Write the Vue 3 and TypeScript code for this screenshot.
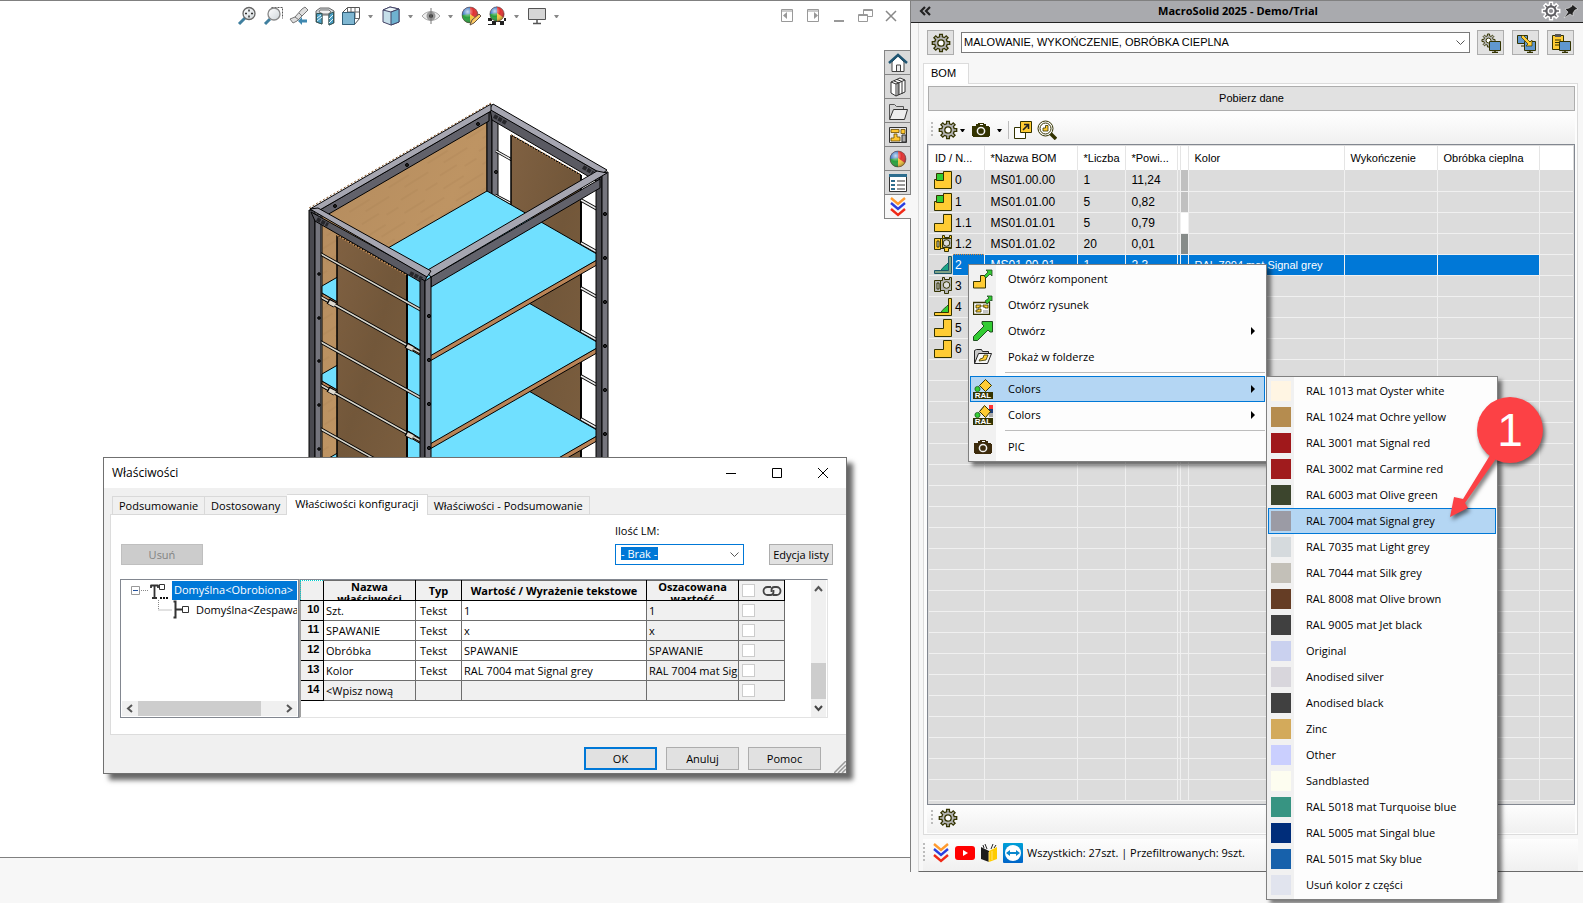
<script setup lang="ts">
import { ref } from 'vue'

interface BomRow {
  icon: string
  id: string
  name: string
  qty: string
  area: string
  swatch: string
  color: string
  selected?: boolean
}

interface MenuItem {
  icon: string
  label: string
  arrow?: boolean
  active?: boolean
  separator?: boolean
}

interface ColorItem {
  label: string
  color: string
  active?: boolean
}

interface PropertyRow {
  no: number
  name: string
  type: string
  value: string
  result: string
  checked: boolean
}

const bomRows: BomRow[] = [
  { icon: 'assembly', id: '0', name: 'MS01.00.00', qty: '1', area: '11,24', swatch: '#c0c0c0', color: '' },
  { icon: 'assembly', id: '1', name: 'MS01.01.00', qty: '5', area: '0,82', swatch: '#c0c0c0', color: '' },
  { icon: 'part', id: '1.1', name: 'MS01.01.01', qty: '5', area: '0,79', swatch: '#ffffff', color: '' },
  { icon: 'bolt', id: '1.2', name: 'MS01.01.02', qty: '20', area: '0,01', swatch: '#878c8a', color: '' },
  { icon: 'weld-selected', id: '2', name: 'MS01.00.01', qty: '1', area: '2,3', swatch: '#0078d7', color: 'RAL 7004 mat Signal grey', selected: true },
  { icon: 'bolt-grey', id: '3', name: '', qty: '', area: '', swatch: '', color: '' },
  { icon: 'weld', id: '4', name: '', qty: '', area: '', swatch: '', color: '' },
  { icon: 'part', id: '5', name: '', qty: '', area: '', swatch: '', color: '' },
  { icon: 'part', id: '6', name: '', qty: '', area: '', swatch: '', color: '' },
]
const emptyRows = 21

const menuItems: MenuItem[] = [
  { icon: 'open-part', label: 'Otwórz komponent' },
  { icon: 'open-drawing', label: 'Otwórz rysunek' },
  { icon: 'open', label: 'Otwórz', arrow: true },
  { icon: 'folder-part', label: 'Pokaż w folderze' },
  { icon: 'ral', label: 'Colors', arrow: true, active: true, separator: true },
  { icon: 'ral-multi', label: 'Colors', arrow: true },
  { icon: 'camera-brown', label: 'PIC', separator: true },
]

const colorItems: ColorItem[] = [
  { label: 'RAL 1013 mat Oyster white', color: '#fff5e3' },
  { label: 'RAL 1024 mat Ochre yellow', color: '#b58c4f' },
  { label: 'RAL 3001 mat Signal red', color: '#a0181b' },
  { label: 'RAL 3002 mat Carmine red', color: '#a01b1d' },
  { label: 'RAL 6003 mat Olive green', color: '#3c452d' },
  { label: 'RAL 7004 mat Signal grey', color: '#9b9ba5', active: true },
  { label: 'RAL 7035 mat Light grey', color: '#d5dadd' },
  { label: 'RAL 7044 mat Silk grey', color: '#c3c0b8' },
  { label: 'RAL 8008 mat Olive brown', color: '#653d25' },
  { label: 'RAL 9005 mat Jet black', color: '#404040' },
  { label: 'Original', color: '#cad1ef' },
  { label: 'Anodised silver', color: '#d8d6dc' },
  { label: 'Anodised black', color: '#404040' },
  { label: 'Zinc', color: '#d3aa5b' },
  { label: 'Other', color: '#cacffe' },
  { label: 'Sandblasted', color: '#fdfdf0' },
  { label: 'RAL 5018 mat Turquoise blue', color: '#379482' },
  { label: 'RAL 5005 mat Singal blue', color: '#002d7a' },
  { label: 'RAL 5015 mat Sky blue', color: '#1761ab' },
  { label: 'Usuń kolor z części', color: '#e1e4ee' },
]

const propertyRows = ref<PropertyRow[]>([
  { no: 10, name: 'Szt.', type: 'Tekst', value: '1', result: '1', checked: false },
  { no: 11, name: 'SPAWANIE', type: 'Tekst', value: 'x', result: 'x', checked: false },
  { no: 12, name: 'Obróbka', type: 'Tekst', value: 'SPAWANIE', result: 'SPAWANIE', checked: false },
  { no: 13, name: 'Kolor', type: 'Tekst', value: 'RAL 7004 mat Signal grey', result: 'RAL 7004 mat Sig', checked: false },
  { no: 14, name: '<Wpisz nową', type: '', value: '', result: '', checked: false },
])
const allChecked = ref(false)

const dialogTabs = ['Podsumowanie', 'Dostosowany', 'Właściwości konfiguracji', 'Właściwości - Podsumowanie']

const viewTools = [
  { id: 'v-fit', label: 'Dopasuj do okna', drop: false },
  { id: 'v-area', label: 'Powiększ obszar', drop: false },
  { id: 'v-prev', label: 'Poprzedni widok', drop: false },
  { id: 'v-section', label: 'Widok przekroju', drop: false },
  { id: 'v-orient', label: 'Orientacja widoku', drop: true },
  { id: 'v-style', label: 'Styl wyświetlania', drop: true },
  { id: 'v-eye', label: 'Ukryj lub pokaż', drop: true },
  { id: 'v-edit', label: 'Edytuj wygląd', drop: false },
  { id: 'v-scene', label: 'Zastosuj scenę', drop: true },
  { id: 'v-monitor', label: 'Ustawienia widoku', drop: true },
]
const windowTools = [
  { id: 'w-left', label: 'Dokuj w lewo' },
  { id: 'w-right', label: 'Dokuj w prawo' },
  { id: 'w-min', label: 'Minimalizuj' },
  { id: 'w-restore', label: 'Przywróć' },
  { id: 'w-close', label: 'Zamknij' },
]
const paneTabs = [
  { id: 't-home', label: 'Zasoby' },
  { id: 't-books', label: 'Biblioteka projektu' },
  { id: 't-folder', label: 'Eksplorator plików' },
  { id: 't-views', label: 'Paleta widoków' },
  { id: 'ball', label: 'Wyglądy' },
  { id: 't-list', label: 'Właściwości' },
  { id: 'chevrons', label: 'MacroSolid' },
]

/* Closed outline of a cog centred in a 20 x 20 box. */
function gearOutline(outer: number, inner: number, teeth: number): string {
  const points: string[] = []
  const step = (Math.PI * 2) / teeth
  for (let i = 0; i < teeth; i++) {
    const a = i * step
    const corners: [number, number][] = [
      [inner, a - step * 0.28],
      [outer, a - step * 0.2],
      [outer, a + step * 0.2],
      [inner, a + step * 0.28],
    ]
    for (const [r, t] of corners) {
      points.push(`${(10 + r * Math.sin(t)).toFixed(1)} ${(10 - r * Math.cos(t)).toFixed(1)}`)
    }
  }
  return `M${points.join('L')}Z`
}
const gear = gearOutline(8.8, 6.4, 8)

const shelfOffsets = [176, 88, 0]
const leftRods = [253, 296, 341, 384, 428]
const rightRods = [200, 243, 288, 331, 376, 419]
</script>

<template>
  <svg class="defs" aria-hidden="true">
    <defs>
      <linearGradient id="lens" x1="0" y1="0" x2="1" y2="1"><stop offset="0" stop-color="#fff" /><stop offset="1" stop-color="#cfd6da" /></linearGradient>
      <linearGradient id="tv" x1="0" y1="0" x2="0" y2="1"><stop offset="0" stop-color="#00a0d8" /><stop offset="1" stop-color="#0064c8" /></linearGradient>
      <radialGradient id="shine" cx=".35" cy=".3" r=".75"><stop offset="0" stop-color="#fff" stop-opacity=".75" /><stop offset=".5" stop-color="#fff" stop-opacity="0" /><stop offset="1" stop-color="#000" stop-opacity=".35" /></radialGradient>

      <symbol id="gear" viewBox="0 0 20 20"><path :d="gear" fill="#b5b5b5" stroke="#333300" stroke-width="1.300" /><circle cx="10" cy="10" r="3.2" fill="#fff" stroke="#333300" stroke-width="1.300" /></symbol>
      <symbol id="gear-light" viewBox="0 0 20 20"><path :d="gear" fill="#5e5e62" stroke="#fff" stroke-width="1.5" /><circle cx="10" cy="10" r="2.8" fill="#8d8d92" stroke="#fff" stroke-width="1.4" /></symbol>
      <symbol id="camera" viewBox="0 0 20 20"><path d="M1 6h4V4h2V3h6v1h2v2h3v1h1v9h-1v1H2v-1H1z" fill="#333300" /><circle cx="10" cy="11" r="3.6" fill="#333300" stroke="#f4f4f4" stroke-width="1.5" /><path d="M9 4h3v1H9z" fill="#fff" /></symbol>
      <symbol id="camera-brown" viewBox="0 0 20 20"><path d="M1 6h4V4h2V3h6v1h2v2h3v1h1v9h-1v1H2v-1H1z" fill="#3d2b0c" /><circle cx="10" cy="11" r="3.6" fill="#3d2b0c" stroke="#f4f4f4" stroke-width="1.5" /><path d="M9 4h3v1H9z" fill="#fff" /></symbol>
      <symbol id="export" viewBox="0 0 20 20"><path d="M1.500 7.500h11v11h-11z" fill="#fff" stroke="#333300" /><path d="M7.500 1.500h11v11h-11z" fill="#ffcc33" stroke="#333300" /><path d="M10 10l5-5M11 4.500h4.500V9" fill="none" stroke="#222" stroke-width="1.600" /></symbol>
      <symbol id="find-part" viewBox="0 0 20 20"><path d="M13 13l6 6" stroke="#333300" stroke-width="3.500" /><circle cx="8.500" cy="8.500" r="7.500" fill="#fff" stroke="#333300" /><circle cx="8.500" cy="8.500" r="5.500" fill="#fff" stroke="#333300" /><path d="M6 11V8h2.500V5.500H11V11z" fill="#ffcc33" stroke="#333300" stroke-width=".8" /></symbol>
      <symbol id="assembly" viewBox="0 0 20 20"><path d="M1.500 9.500h9v-8h8v17h-17z" fill="#ffcc33" stroke="#333300" /><path d="M3.500 3.500h7v7h-7z" fill="#33cc33" stroke="#333300" /></symbol>
      <symbol id="part" viewBox="0 0 20 20"><path d="M1.500 10.500h9v-9h8v17h-17z" fill="#ffcc33" stroke="#333300" /></symbol>
      <symbol id="bolt" viewBox="0 0 20 20"><path d="M1.500 4.500h6v11h-6zM7.500 4.500h2v-3h2v2h5v-2h2v13h-3v3h-4v-3h-4z" fill="#ffcc33" stroke="#333300" /><path d="M9.500 4.500h9v9h-9z" fill="#b5b5b5" stroke="#333300" /><circle cx="13.500" cy="9" r="3.300" fill="#ddd" stroke="#333300" /><path d="M4 7h2v6H4z" fill="#ddd" stroke="#333300" /></symbol>
      <symbol id="bolt-grey" viewBox="0 0 20 20"><path d="M1.500 4.500h6v11h-6zM7.500 4.500h2v-3h2v2h5v-2h2v13h-3v3h-4v-3h-4z" fill="#b5b5b5" stroke="#333300" /><circle cx="13.500" cy="9" r="3.300" fill="#ddd" stroke="#333300" /><path d="M4 7h2v6H4z" fill="#ddd" stroke="#333300" /></symbol>
      <symbol id="weld" viewBox="0 0 20 20"><path d="M8 15.500c1-3 5-5 7.500-8v8z" fill="#33cc33" stroke="#1f5a1f" /><path d="M1.500 15.500h14v-14h3v17h-17z" fill="#ffcc33" stroke="#333300" /></symbol>
      <symbol id="weld-selected" viewBox="0 0 20 20"><path d="M8 15.500c1-3 5-5 7.500-8v8z" fill="#1aa385" stroke="#10605c" /><path d="M1.500 15.500h14v-14h3v17h-17z" fill="#80a285" stroke="#1a5668" /></symbol>
      <symbol id="open-part" viewBox="0 0 20 20"><path d="M.5 12.500h7v-6h5v12.500h-12z" fill="#ffcc33" stroke="#333300" /><path d="M11 7l4-4-2-2h6v6l-2-2-4 4z" fill="#33cc33" stroke="#1f4d1f" stroke-width=".8" /></symbol>
      <symbol id="open-drawing" viewBox="0 0 20 20"><path d="M.5 7.500h16v12H.5z" fill="#fff" stroke="#333300" stroke-width="1.300" /><path d="M3 10h5v2H6v1H3zM10 10h5v3h-3v-1h-2zM3 17v-2h2v-1h3v3z" fill="#ffcc33" stroke="#333300" stroke-width=".8" /><path d="M10 15h5v3h-5z" fill="#c4c4c4" /><path d="M12 6l4-3-2-2h5v5l-1-1-4 4z" fill="#33cc33" stroke="#1f4d1f" stroke-width=".8" /></symbol>
      <symbol id="open" viewBox="0 0 20 20"><path d="M.5 19.500v-4L11 5 9 3V.5h10.500V11H17l-2-2L4.500 19.500z" fill="#33cc33" stroke="#1f4d1f" /></symbol>
      <symbol id="folder-part" viewBox="0 0 20 20"><path d="M1.500 16.500v-13l2-1h5l1 2h6v3" fill="#c8c8c8" stroke="#222" /><path d="M1.500 16.500l4-10h13l-4 10z" fill="#f5f5f5" stroke="#222" /><path d="M6 14l1-2 3-1 1-3h4l-2 5z" fill="#ffcc33" stroke="#333300" stroke-width=".8" /></symbol>
      <symbol id="ral" viewBox="0 0 20 20"><path d="M12.500.5l6 6-6 6-6-6z" fill="#ffcc33" stroke="#333300" /><path d="M4 9l7-7" stroke="#333300" stroke-dasharray="1 1" /><circle cx="4.500" cy="10" r="2.600" fill="#33cc33" stroke="#1f5a1f" stroke-width=".8" /><path d="M0 13h20v7H0z" fill="#333300" /><text x="10" y="19" font-size="8" font-weight="700" fill="#fff" text-anchor="middle" font-family="Liberation Sans, sans-serif">RAL</text></symbol>
      <symbol id="ral-multi" viewBox="0 0 20 20"><path d="M16 0h4v4h-4z" fill="#ff3232" /><path d="M16 4h4v4h-4z" fill="#1b3e78" /><path d="M16 8h4v4h-4z" fill="#a8a8a8" /><path d="M11.500.5l6 6-5 6-6-6z" fill="#ffcc33" stroke="#333300" /><path d="M4 9l7-7" stroke="#333300" stroke-dasharray="1 1" /><circle cx="4.500" cy="10" r="2.600" fill="#33cc33" stroke="#1f5a1f" stroke-width=".8" /><path d="M0 13h20v7H0z" fill="#333300" /><text x="10" y="19" font-size="8" font-weight="700" fill="#fff" text-anchor="middle" font-family="Liberation Sans, sans-serif">RAL</text></symbol>
      <symbol id="screen" viewBox="0 0 20 20"><path d="M8.500 8.500h11v9h-11z" fill="#6097cf" stroke="#333300" /><path d="M14 18v1.500M11 19.500h6" stroke="#333300" stroke-width="1.500" /></symbol>
      <symbol id="cfg-gear" viewBox="0 0 20 20"><svg x="0" y="0" width="15" height="15"><use href="#gear" /></svg><use href="#screen" /></symbol>
      <symbol id="cfg-copy" viewBox="0 0 20 20"><path d="M1.500 2.500h10v8h-10z" fill="#6097cf" stroke="#333300" /><path d="M5 13h4" stroke="#333300" /><use href="#screen" /><path d="M7 2l7 7 2-2v6h-6l2-2-7-7z" fill="#ffcc33" stroke="#333300" stroke-width=".7" /></symbol>
      <symbol id="cfg-paste" viewBox="0 0 20 20"><path d="M1.500 2.500h11v14h-11z" fill="#ffcc33" stroke="#333300" /><path d="M4 1h6v3H4z" fill="#555" /><path d="M4 7h6M4 9.500h4M4 12h4" stroke="#333300" /><use href="#screen" /></symbol>
      <symbol id="chevrons" viewBox="0 0 20 20"><path d="M3 1l7 6 7-6" fill="none" stroke="#ff9a2e" stroke-width="2.400" /><path d="M3 6l7 6 7-6" fill="none" stroke="#2a3fe0" stroke-width="2.400" /><path d="M3 12l7 6 7-6" fill="none" stroke="#f02a18" stroke-width="2.400" /></symbol>
      <symbol id="youtube" viewBox="0 0 20 20"><rect x="0" y="3" width="20" height="14" rx="3" fill="#f00" /><path d="M8 7l5 3-5 3z" fill="#fff" /></symbol>
      <symbol id="book" viewBox="0 0 20 20"><path d="M2 4l8 4v11l-8-3z" fill="#1c1c1c" /><path d="M10 8l8-4v12l-8 3z" fill="#fc0" /><path d="M5 5L4 2M8 6L6 1M12 6l2-5M15 5l2-3" stroke="#222" /><path d="M10 9v10M13 8v9" stroke="#ffe27a" /></symbol>
      <symbol id="teamviewer" viewBox="0 0 20 20"><rect width="20" height="20" rx="1" fill="url(#tv)" /><circle cx="10" cy="10" r="8" fill="#fff" /><path d="M3 10l4-3v2h6V7l4 3-4 3v-2H7v2z" fill="#0a86cc" /></symbol>
      <symbol id="ball" viewBox="0 0 20 20"><circle cx="10" cy="10" r="8" fill="#e03030" /><path d="M10 2a8 8 0 0 0-8 8h8z" fill="#2c6fc0" /><path d="M2 10a8 8 0 0 0 8 8V9z" fill="#28a03c" /><path d="M10 18a8 8 0 0 0 7-4l-7-5z" fill="#f5c63c" /><circle cx="10" cy="10" r="8" fill="url(#shine)" stroke="#444" stroke-width=".5" /></symbol>

      <symbol id="v-fit" viewBox="0 0 20 20"><path d="M2 18l6-6" stroke="#3f7f9f" stroke-width="3" /><circle cx="12" cy="7.500" r="6" fill="url(#lens)" stroke="#666" stroke-width="1.300" /><path d="M12 3.500v2M12 9.500v2M8 7.500h2M14 7.500h2" stroke="#333" stroke-width="1.500" /></symbol>
      <symbol id="v-area" viewBox="0 0 20 20"><path d="M8.500 1.500h11v11" fill="none" stroke="#555" stroke-dasharray="2 1" /><path d="M2 18l5-5" stroke="#3f7f9f" stroke-width="3" /><circle cx="11" cy="8" r="6" fill="url(#lens)" stroke="#888" stroke-width="1.300" /></symbol>
      <symbol id="v-prev" viewBox="0 0 20 20"><path d="M1 13l5-2 7-8 3-2 3 3-3 3-8 8-4 2z" fill="#dedede" stroke="#777" /><path d="M6 11l4 3M10 7l3 3" stroke="#777" /><path d="M9 15l4-4v2.500h5v3h-5V19z" fill="#3f88b0" /></symbol>
      <symbol id="v-section" viewBox="0 0 20 20"><path d="M1 5l4-3h9l5 3v12l-5 2V9H7v9l-6-2z" fill="#cfd3d6" stroke="#666" /><path d="M5 4h9l2 2-3 2H8L4 6z" fill="#f1f1f1" stroke="#777" /><path d="M1.500 7.500H7V18l-5.500-2zM14 8l4.500-2v11L14 19z" fill="#4a9ec4" stroke="#355" /><path d="M2 12l4-3M2 15l5-4M14 13l4-4M14 17l4-4" stroke="#e4f5fb" /></symbol>
      <symbol id="v-orient" viewBox="0 0 20 20"><path d="M1.500 6.500l5-5h12v11l-5 6h-12z" fill="#fff" stroke="#555" /><path d="M6.500 1.500v11h12M10 2v10M14 2v10M7 6h11" fill="none" stroke="#666" /><path d="M1.500 6.500h12v12h-12z" fill="#7fb7d2" stroke="#32607a" /></symbol>
      <symbol id="v-style" viewBox="0 0 20 20"><path d="M2 4l7-3 9 2v13l-8 3-8-3z" fill="#c6dfea" stroke="#446" /><path d="M2 4l8 2 8-3-9-2z" fill="#eef7fa" stroke="#446" /><path d="M10 6v13l8-3V3z" fill="#6fb2d0" stroke="#446" /></symbol>
      <symbol id="v-eye" viewBox="0 0 20 20"><path d="M1 10c5-6 13-6 18 0-5 6-13 6-18 0z" fill="#efefef" stroke="#aaa" /><circle cx="10" cy="10" r="4.500" fill="#999" /><circle cx="10" cy="10" r="2" fill="#333" /><path d="M10 2v16" stroke="#777" /></symbol>
      <symbol id="v-edit" viewBox="0 0 20 20"><svg x="-1" y="-1" width="20" height="20"><use href="#ball" /></svg><path d="M9 19l2-5 7-6 2 2-7 7z" fill="#fc6" stroke="#654" /></symbol>
      <symbol id="v-scene" viewBox="0 0 20 20"><path d="M1 12h18v7H1z" fill="#fff" /><path d="M1 12h4v3H1zM9 13h4v3H9zM5 15h4v4H5zM13 15h4v4h-4zM17 12h2v3h-2zM1 18h4v1H1z" fill="#222" /><svg x="1" y="-1" width="18" height="18"><use href="#ball" /></svg></symbol>
      <symbol id="v-monitor" viewBox="0 0 20 20"><path d="M1.500 2.500h17v11h-17z" fill="#d6d6d6" stroke="#555" /><path d="M10 14v3M6 17.500h8" stroke="#555" stroke-width="1.500" /></symbol>

      <symbol id="w-left" viewBox="0 0 20 20"><path d="M4.500 3.500h11v12h-11zM4 5h12" fill="none" stroke="#999" /><path d="M10 6v7L6 9.500z" fill="#999" /></symbol>
      <symbol id="w-right" viewBox="0 0 20 20"><path d="M4.500 3.500h11v12h-11zM4 5h12" fill="none" stroke="#999" /><path d="M11 6v7l4-3.500z" fill="#999" /></symbol>
      <symbol id="w-min" viewBox="0 0 20 20"><path d="M5 15h10" stroke="#999" stroke-width="2" /></symbol>
      <symbol id="w-restore" viewBox="0 0 20 20"><path d="M8.500 9V3.500h9v7H13M8 4.500h10" fill="none" stroke="#999" /><path d="M3.500 8.500h9v7h-9zM3 9.500h10" fill="none" stroke="#999" /></symbol>
      <symbol id="w-close" viewBox="0 0 20 20"><path d="M5 5l10 10M15 5L5 15" stroke="#888" stroke-width="1.500" /></symbol>

      <symbol id="t-home" viewBox="0 0 20 20"><path d="M4 9v9.500h12V9l-6-6z" fill="#fff" stroke="#444" /><path d="M8.500 18v-6h4v6" fill="#eee" stroke="#444" /><path d="M1 10l9-8 9 8" fill="none" stroke="#1f5572" stroke-width="2.500" /></symbol>
      <symbol id="t-books" viewBox="0 0 20 20"><path d="M3 5l9-4 5 2v12l-9 4-5-3z" fill="#fff" stroke="#333" /><path d="M3 5l5 2v12M8 7l9-4M6 4l5 2v12M9 2.500l5 2V17M10 6v12" fill="none" stroke="#333" /></symbol>
      <symbol id="t-folder" viewBox="0 0 20 20"><path d="M1.500 18V3.500h5l2 2h7V9" fill="#d5d5d5" stroke="#555" /><path d="M1.500 18.500l4-10h14l-3 10z" fill="#eee" stroke="#333" /></symbol>
      <symbol id="t-views" viewBox="0 0 20 20"><path d="M1.500 2.500h17v15h-17z" fill="#e8e8e8" stroke="#333" /><path d="M3 4.500h8v3H3zM13 4.500h4v4h-4zM6 9h3v3h3v4H3v-3h3z" fill="#ffc832" stroke="#6a4c00" stroke-width=".8" /><path d="M14 10h4v7h-4z" fill="#aaa" stroke="#333" /></symbol>
      <symbol id="t-list" viewBox="0 0 20 20"><path d="M1.500 1.500h17v17h-17z" fill="#fff" stroke="#333" /><path d="M1 1h18v3H1z" fill="#2d6d8e" /><path d="M3 7h4v2H3zM3 11h4v2H3zM3 15h4v2H3z" fill="#2d6d8e" /><path d="M9 8h8M9 12h8M9 16h8" stroke="#333" /></symbol>
    </defs>
  </svg>

  <div class="app">
    <section class="workspace">
      <header class="view-bar">
        <div class="view-tools">
          <template v-for="tool in viewTools" :key="tool.id">
            <button type="button" class="bare" :aria-label="tool.label"><svg class="ico"><use :href="'#' + tool.id" /></svg></button>
            <button v-if="tool.drop" type="button" class="bare drop" :aria-label="tool.label + ' – więcej'"></button>
          </template>
        </div>
        <div class="view-tools">
          <button v-for="tool in windowTools" :key="tool.id" type="button" class="bare" :aria-label="tool.label"><svg class="ico"><use :href="'#' + tool.id" /></svg></button>
        </div>
      </header>

      <div class="stage">
        <svg class="model" viewBox="308 100 302 680" width="302" height="680" role="img" aria-label="Model regału">
          <defs>
            <clipPath id="cut"><path d="M308 100h302v360H308z" /></clipPath>
            <linearGradient id="wood" x1="0" y1="0" x2="1" y2="1"><stop offset="0" stop-color="#b38b5e" /><stop offset=".5" stop-color="#be9463" /><stop offset="1" stop-color="#b0895c" /></linearGradient>
            <linearGradient id="wood-dark" x1="0" y1="0" x2="1" y2="1"><stop offset="0" stop-color="#806142" /><stop offset=".5" stop-color="#72573a" /><stop offset="1" stop-color="#7b5e3f" /></linearGradient>
            <pattern id="grain" width="46" height="30" patternUnits="userSpaceOnUse" patternTransform="rotate(-32)"><path d="M0 5h24M14 13h28M4 22h20M30 27h14" stroke="#7a5730" stroke-opacity=".08" stroke-width="2" /></pattern>
          </defs>
          <g clip-path="url(#cut)" stroke="#000" stroke-linejoin="round">
            <path d="M322 215L487 120V470H322z" fill="url(#wood)" />
            <path d="M322 215L487 120V470H322z" fill="url(#grain)" stroke="none" />
            <path d="M487 112h5v90h-5z" fill="#4d4d54" />
            <path d="M492 112h6v90h-6z" fill="#77777f" />
            <circle cx="496" cy="172" r="1.500" fill="#333" />
            <path d="M496 151l16 9M495 195l17 9" stroke-width="3" /><path d="M496 151l16 9M495 195l17 9" stroke="#eee" stroke-width="1.400" />
            <path d="M511 135l70 40V470h-70z" fill="url(#wood-dark)" />
            <path d="M511 135l70 40V470h-70z" fill="url(#grain)" />
            <path d="M511 135l70 40" stroke="#b08050" stroke-dasharray="1 2" stroke-width="2" />
            <path d="M581 175v290" stroke-width="1.800" />
            <g v-for="y in rightRods" :key="y">
              <path :d="`M581 ${y}l16 9`" stroke-width="3.400" /><path :d="`M581 ${y}l16 9`" stroke="#eee" stroke-width="1.600" />
            </g>
            <g v-for="dy in shelfOffsets" :key="dy" :transform="`translate(0 ${dy})`">
              <path d="M602 257v5L430 361 322 299v-6l106 61z" fill="#b98356" />
              <path d="M487 191l115 66-172 99-108-63v-7z" fill="#70e0ff" />
            </g>
            <path d="M337 235l70 40V470h-70z" fill="url(#wood-dark)" />
            <path d="M337 235l70 40V470h-70z" fill="url(#grain)" />
            <path d="M337 235l70 40" stroke="#c08b55" stroke-dasharray="2 1" stroke-width="2" />
            <path d="M407 275v190" stroke-width="1.800" />
            <g v-for="(y, i) in leftRods" :key="y">
              <path :d="`M319 ${y}l102 57`" stroke-width="3.200" /><path :d="`M319 ${y}l102 57`" stroke="#d8d6cc" stroke-width="1.500" />
              <path v-if="i % 2" :d="`M328 ${y + 5}l7 4M406 ${y + 49}l7 4`" stroke-width="6" />
              <path v-if="i % 2" :d="`M329 ${y + 6}l6 3M407 ${y + 50}l6 3`" stroke="#dedad0" stroke-width="4" />
            </g>
            <path d="M309 210h6v255h-6z" fill="#4a4a50" /><path d="M315 214h6v250h-6z" fill="#75757d" />
            <path d="M596 176h6v290h-6z" fill="#4a4a50" /><path d="M602 172h6v290h-6z" fill="#75757d" />
            <path d="M490 109L602 174L598 182L492 120z" fill="#5a5a62" />
            <path d="M493 104L607 170L602 174L489 109z" fill="#a6a6b1" />
            <path d="M318 211L489 112V121L327 215z" fill="#62626b" />
            <path d="M491 104V111L318 211L310 209z" fill="#a6a6b1" />
            <path d="M491 103L309 208" stroke="#8b5a2e" stroke-dasharray="2 2" />
            <path d="M431 277L600 179V188L431 287z" fill="#62626b" />
            <path d="M426 271L597 171L607 173L431 277z" fill="#a6a6b1" />
            <path d="M311 212L427 276L424 284L315 221z" fill="#5a5a62" />
            <path d="M310 209L318 208L431 271L427 277z" fill="#a6a6b1" />
            <path d="M420 278l5 3v185h-5z" fill="#4a4a50" /><path d="M425 281l6-4v190h-6z" fill="#75757d" />
            <path d="M317 219l11 6M410 273l12 6M494 116l12 7M583 167l10 6" stroke="#26262a" stroke-width="4" stroke-dasharray="4 1" />
            <g fill="#222">
              <circle cx="335" cy="206" r="1.500" /><circle cx="407" cy="165" r="1.500" /><circle cx="478" cy="124" r="1.500" />
              <circle v-for="y in [274, 318, 361, 405, 449]" :key="'l' + y" cx="319" :cy="y" r="1.300" />
              <circle v-for="y in [316, 360, 404, 448]" :key="'f' + y" cx="429" :cy="y" r="1.600" />
              <circle v-for="y in [214, 258, 302, 346, 390, 434]" :key="'r' + y" cx="605" :cy="y" r="1.600" />
            </g>
          </g>
          <path d="M426 773.500h6M470 773.500h20M563 773.500h20" stroke="#222" />
        </svg>
        <nav class="pane-tabs" aria-label="Okienko zadań">
          <button v-for="tab in paneTabs" :key="tab.id" type="button" :class="{ on: tab.id === 'chevrons' }" :aria-label="tab.label">
            <svg class="ico"><use :href="'#' + tab.id" /></svg>
          </button>
        </nav>
      </div>
    </section>

    <aside class="panel">
      <header class="panel-title">
        <button type="button" class="bare" aria-label="Zwiń"><svg class="ico" viewBox="0 0 20 20"><path d="M10 6l-4 4 4 4M15 6l-4 4 4 4" fill="none" stroke="#222" stroke-width="2.200" /></svg></button>
        <h1>MacroSolid 2025 - Demo/Trial</h1>
        <button type="button" class="bare" aria-label="Ustawienia"><svg class="ico"><use href="#gear-light" /></svg></button>
        <button type="button" class="bare" aria-label="Przypnij"><svg class="ico" viewBox="0 0 20 20"><path d="M11 3l6 5-3 1-2 3 0 3-3-2-6 4 4-6-3-3 4-1 3-2z" fill="#222" stroke="#e8e8e8" stroke-width=".6" /></svg></button>
      </header>

      <div class="panel-body">
        <div class="config-row">
          <button type="button" class="tool" aria-label="Konfiguracja"><svg class="ico"><use href="#gear" /></svg></button>
          <select class="config" aria-label="Konfiguracja kolumn"><option>MALOWANIE, WYKOŃCZENIE, OBRÓBKA CIEPLNA</option></select>
          <div class="tools">
            <button type="button" class="tool" aria-label="Ustawienia ekranu"><svg class="ico"><use href="#cfg-gear" /></svg></button>
            <button type="button" class="tool" aria-label="Kopiuj"><svg class="ico"><use href="#cfg-copy" /></svg></button>
            <button type="button" class="tool" aria-label="Wklej"><svg class="ico"><use href="#cfg-paste" /></svg></button>
          </div>
        </div>

        <button type="button" class="bom-tab">BOM</button>
        <div class="bom-page">
          <button type="button" class="fetch">Pobierz dane</button>
          <div class="strip">
            <span class="grip"></span>
            <button type="button" class="bare" aria-label="Opcje"><svg class="ico"><use href="#gear" /></svg></button>
            <button type="button" class="bare caret" aria-label="Opcje – więcej"></button>
            <button type="button" class="bare" aria-label="Zdjęcie"><svg class="ico"><use href="#camera" /></svg></button>
            <button type="button" class="bare caret wide" aria-label="Zdjęcie – więcej"></button>
            <span class="bar"></span>
            <button type="button" class="bare" aria-label="Eksport"><svg class="ico"><use href="#export" /></svg></button>
            <button type="button" class="bare" aria-label="Szukaj"><svg class="ico"><use href="#find-part" /></svg></button>
          </div>

          <div class="bom-frame">
            <table class="bom">
              <colgroup><col class="c-id" /><col class="c-name" /><col class="c-qty" /><col class="c-area" /><col class="c-gap" /><col class="c-swatch" /><col class="c-color" /><col class="c-finish" /><col class="c-heat" /><col /></colgroup>
              <thead>
                <tr><th>ID / N...</th><th>*Nazwa BOM</th><th>*Liczba</th><th>*Powi...</th><th></th><th></th><th>Kolor</th><th>Wykończenie</th><th>Obróbka cieplna</th><th></th></tr>
              </thead>
              <tbody>
                <tr v-for="row in bomRows" :key="row.id" :class="{ selected: row.selected }">
                  <td class="id"><div><svg class="ico"><use :href="'#' + row.icon" /></svg><span>{{ row.id }}</span></div></td>
                  <td>{{ row.name }}</td><td>{{ row.qty }}</td><td>{{ row.area }}</td><td></td>
                  <td :style="{ backgroundColor: row.swatch }"></td>
                  <td class="words">{{ row.color }}</td><td></td><td></td><td></td>
                </tr>
                <tr v-for="n in emptyRows" :key="'empty' + n"><td v-for="c in 10" :key="c"></td></tr>
              </tbody>
            </table>
          </div>

          <div class="strip low">
            <span class="grip"></span>
            <button type="button" class="bare" aria-label="Ustawienia tabeli"><svg class="ico"><use href="#gear" /></svg></button>
          </div>
        </div>

        <footer class="status">
          <span class="grip"></span>
          <button type="button" class="bare" aria-label="MacroSolid"><svg class="ico"><use href="#chevrons" /></svg></button>
          <button type="button" class="bare" aria-label="YouTube"><svg class="ico"><use href="#youtube" /></svg></button>
          <button type="button" class="bare" aria-label="Podręcznik"><svg class="ico"><use href="#book" /></svg></button>
          <button type="button" class="bare" aria-label="TeamViewer"><svg class="ico"><use href="#teamviewer" /></svg></button>
          <p>Wszystkich: 27szt. | Przefiltrowanych: 9szt.</p>
        </footer>
      </div>

      <div class="menu context">
        <template v-for="(item, i) in menuItems" :key="i">
          <hr v-if="item.separator" />
          <button type="button" :class="{ active: item.active }">
            <svg class="ico"><use :href="'#' + item.icon" /></svg><span>{{ item.label }}</span><i v-if="item.arrow"></i>
          </button>
        </template>
      </div>

      <div class="menu colors">
        <button v-for="item in colorItems" :key="item.label" type="button" :class="{ active: item.active }">
          <b :style="{ backgroundColor: item.color }"></b><span>{{ item.label }}</span>
        </button>
      </div>

      <svg class="callout" viewBox="0 0 110 140" width="110" height="140" aria-label="Krok 1">
        <g class="callout-shape" fill="#fc4145">
          <path d="M56 72L27 119l-9-2-4 20 18-9-3-5L62 76z" />
          <circle cx="74" cy="50" r="33" />
        </g>
        <text x="74" y="66" text-anchor="middle">1</text>
      </svg>
    </aside>

    <section class="dialog" role="dialog" aria-labelledby="dialog-title">
      <header class="dialog-title">
        <h2 id="dialog-title">Właściwości</h2>
        <button type="button" class="bare" aria-label="Minimalizuj"><svg viewBox="0 0 12 12"><path d="M1 6.500h10" stroke="#000" /></svg></button>
        <button type="button" class="bare" aria-label="Maksymalizuj"><svg viewBox="0 0 12 12"><path d="M1.500 1.500h9v9h-9z" fill="none" stroke="#000" /></svg></button>
        <button type="button" class="bare" aria-label="Zamknij"><svg viewBox="0 0 12 12"><path d="M1 1l10 10M11 1L1 11" stroke="#000" /></svg></button>
      </header>

      <div class="dialog-tabs">
        <button v-for="tab in dialogTabs" :key="tab" type="button" :class="{ on: tab === 'Właściwości konfiguracji' }">{{ tab }}</button>
      </div>

      <div class="dialog-page">
        <div class="dialog-row">
          <button type="button" class="push usun" disabled>Usuń</button>
          <div class="field">
            <label for="lm">Ilość LM:</label>
            <select id="lm"><option>- Brak -</option></select>
          </div>
          <button type="button" class="push edit">Edycja listy</button>
        </div>

        <div class="split">
          <div class="tree">
            <div class="node">
              <svg width="50" height="20" viewBox="0 0 50 20"><path d="M9.500 5.500h8v8h-8z" fill="#fff" stroke="#999" /><path d="M11 9.500h5" stroke="#24529c" /><path d="M19 9.500h8M33 20V16" stroke="#888" stroke-dasharray="1 1" /><path d="M28.500 4.500h8M32.500 5v12M29 4v3M36 4v3M30 17h5" stroke="#333" stroke-width="1.800" /><path d="M37.500 3.500h5v5h-5z" fill="#fff" stroke="#333" /><path d="M38 17h9" stroke="#111" stroke-width="2" stroke-dasharray="2 1" /></svg>
              <span class="picked">Domyślna&lt;Obrobiona&gt;</span>
            </div>
            <div class="node child">
              <svg width="36" height="20" viewBox="0 0 36 20"><path d="M.5 0v10h13" fill="none" stroke="#888" stroke-dasharray="1 1" /><path d="M17.500 1v17M15.500 1.500h3M15.500 17.500h3M18 9.500h6" stroke="#333" stroke-width="2" /><path d="M24.500 6.500h6v6h-6z" fill="#fff" stroke="#333" /></svg>
              <span>Domyślna&lt;Zespawa</span>
            </div>
            <div class="hscroll" aria-hidden="true">
              <svg viewBox="0 0 16 15"><path d="M10 4L6 7.500 10 11" fill="none" stroke="#555" stroke-width="2" /></svg><span></span><svg viewBox="0 0 16 15"><path d="M6 4l4 3.500L6 11" fill="none" stroke="#555" stroke-width="2" /></svg>
            </div>
          </div>

          <div class="grid-pane">
            <table class="props">
              <colgroup><col class="p-no" /><col class="p-name" /><col class="p-type" /><col class="p-value" /><col class="p-result" /><col class="p-check" /></colgroup>
              <thead>
                <tr>
                  <th class="corner"></th>
                  <th><div>Nazwa<br />właściwości</div></th><th>Typ</th><th>Wartość / Wyrażenie tekstowe</th>
                  <th><div>Oszacowana<br />wartość</div></th>
                  <th class="link">
                    <span class="linked"><input v-model="allChecked" type="checkbox" aria-label="Zaznacz wszystkie" />
                    <svg width="20" height="12" viewBox="0 0 20 12"><path d="M9 2H5.500a4 4 0 0 0 0 8h3a3 3 0 0 0 3-3V5M11 10h3.500a4 4 0 0 0 0-8h-2a3 3 0 0 0-3 3v2" fill="none" stroke="#444" stroke-width="1.800" /></svg></span>
                  </th>
                </tr>
              </thead>
              <tbody>
                <tr v-for="row in propertyRows" :key="row.no" :class="{ fresh: !row.type }">
                  <th>{{ row.no }}</th><td>{{ row.name }}</td><td class="type">{{ row.type }}</td><td>{{ row.value }}</td><td class="ro">{{ row.result }}</td>
                  <td class="ro"><input v-model="row.checked" type="checkbox" :aria-label="'Połącz wiersz ' + row.no" /></td>
                </tr>
              </tbody>
            </table>
            <div class="vscroll" aria-hidden="true">
              <svg viewBox="0 0 15 18"><path d="M4 11l3.500-4L11 11" fill="none" stroke="#555" stroke-width="2" /></svg><span></span><svg viewBox="0 0 15 18"><path d="M4 7l3.500 4L11 7" fill="none" stroke="#444" stroke-width="2" /></svg>
            </div>
          </div>
        </div>
      </div>

      <footer class="dialog-foot">
        <button type="button" class="push main">OK</button>
        <button type="button" class="push">Anuluj</button>
        <button type="button" class="push">Pomoc</button>
        <svg class="resize" width="12" height="12" viewBox="0 0 12 12"><path d="M0 12L12 0M4 12l8-8M8 12l4-4" stroke="#999" stroke-width="1.500" /></svg>
      </footer>
    </section>
  </div>
</template>

<style>
body {
  margin: 0;
  background: #f7f7f7;
}
</style>

<style scoped>
* {
  box-sizing: border-box;
}
.defs {
  position: absolute;
  width: 0;
  height: 0;
}
.app {
  position: relative;
  display: flex;
  align-items: flex-start;
  min-height: 100vh;
  overflow: hidden;
  color: #000;
  font-family: "Open Sans", "Noto Sans", sans-serif;
  font-size: 11px;
  line-height: 16px;
}
button,
select,
input {
  margin: 0;
  color: inherit;
  font: inherit;
}
h1,
h2,
p {
  margin: 0;
  font-size: 11px;
  font-weight: 400;
}
.ico {
  display: block;
  flex: none;
  width: 20px;
  height: 20px;
}
.bare {
  flex: none;
  padding: 0;
  border: 0;
  background: none;
}

/* Model view */
.workspace {
  flex: 1;
  min-width: 0;
  height: calc(100vh - 45px);
  border-top: 1px solid #808080;
  border-bottom: 1px solid #808080;
  background: #fff;
}
.view-bar {
  display: flex;
  justify-content: space-between;
  padding: 5px 9px 5px 237px;
}
.view-tools {
  display: flex;
  gap: 6px;
  align-items: center;
}
.drop {
  width: 5px;
  height: 3px;
  margin: 0 2px 0 1px;
  border: solid transparent;
  border-width: 3px 2px 0;
  border-top-color: #888;
}
.stage {
  display: flex;
  justify-content: space-between;
  padding-top: 19px;
}
.model {
  flex: none;
  margin: 50px 0 0 308px;
}
.pane-tabs {
  position: relative;
  z-index: 1;
  width: 27px;
  margin-right: -1px;
}
.pane-tabs button {
  display: grid;
  place-items: center;
  width: 27px;
  height: 24px;
  padding: 0;
  border: 1px solid #858585;
  border-bottom: 0;
  background: #dadada;
}
.pane-tabs .on {
  height: 25px;
  border-right: 0;
  border-bottom: 1px solid #858585;
  background: #f7f7f7;
}

/* Task panel */
.panel {
  position: relative;
  flex: none;
  width: 673px;
  border-left: 1px solid #808080;
  background: #f7f7f7;
}
.panel-title {
  display: flex;
  align-items: center;
  height: 23px;
  padding: 0 2px 2px 4px;
  border-top: 1px solid #808080;
  border-bottom: 1px solid #222;
  background: #a9aaae;
}
.panel-title h1 {
  flex: 1;
  font-weight: 700;
  text-align: center;
}
.panel-body {
  margin-left: 7px;
  padding: 7px 5px 0 4px;
  border-left: 1px solid #dcdcdc;
  border-bottom: 1px solid #696969;
  font-family: "Liberation Sans", Arial, sans-serif;
}
.config-row {
  display: flex;
  align-items: center;
  gap: 7px;
  padding: 0 4px 0 4px;
}
.tool {
  display: grid;
  place-items: center;
  width: 27px;
  height: 25px;
  padding: 0;
  border: 1px solid #adadad;
  background: #e1e1e1;
}
.tools {
  display: flex;
  gap: 8px;
}
.config {
  flex: 1;
  min-width: 0;
  height: 21px;
  padding: 0 2px 1px;
  border: 1px solid #7a7a7a;
  border-radius: 0;
  appearance: none;
  background: #fff url("data:image/svg+xml,%3Csvg xmlns='http://www.w3.org/2000/svg' width='9' height='6'%3E%3Cpath d='M.5 .5l4 4 4-4' fill='none' stroke='%23555'/%3E%3C/svg%3E") no-repeat right 4px center;
}
.bom-tab {
  display: block;
  position: relative;
  z-index: 1;
  width: 46px;
  height: 21px;
  margin: 8px 0 -1px;
  padding: 0 0 2px 7px;
  border: 1px solid #dcdcdc;
  border-bottom: 0;
  background: #fff;
  text-align: left;
}
.bom-page {
  padding: 2px 2px 1px 3px;
  border: 1px solid #dcdcdc;
  background: #fdfdfd;
}
.fetch {
  display: block;
  width: calc(100% - 1px);
  height: 25px;
  margin: 0 0 5px 1px;
  padding: 0 0 2px;
  border: 1px solid #adadad;
  background: #e1e1e1;
}
.strip {
  display: flex;
  align-items: center;
  height: 28px;
  padding: 0 4px;
  background: linear-gradient(#fdfdfd, #f0f0f0);
}
.strip.low {
  height: 27px;
  margin-top: 1px;
  padding-bottom: 3px;
}
.grip {
  width: 2px;
  height: 16px;
  margin-right: 5px;
  background: repeating-linear-gradient(#bcbcbc 0 2px, transparent 2px 4px);
}
.caret {
  width: 5px;
  height: 3px;
  margin: 0 6px 0 2px;
  border: solid transparent;
  border-width: 3px 2px 0;
  border-top-color: #000;
}
.caret.wide {
  margin: 0 6px;
}
.bar {
  width: 1px;
  height: 18px;
  margin-right: 4px;
  background: #bdbdbd;
}
.bar + .bare {
  margin-right: 4px;
}
.bom-frame {
  padding: 1px 1px 3px;
  border: 1px solid #828790;
  background: #dcdcdc;
}
.bom {
  width: 100%;
  border-collapse: collapse;
  table-layout: fixed;
  font-size: 12px;
  line-height: 14px;
}
.bom th {
  height: 24px;
  padding: 0 0 0 6px;
  border-right: 1px solid #e5e5e5;
  background: #fff;
  font-weight: 400;
  font-size: 11px;
  text-align: left;
  white-space: nowrap;
}
.bom td {
  height: 21px;
  padding: 0 0 0 6px;
  border-right: 1px solid #f0f0f0;
  border-bottom: 1px solid #f0f0f0;
  white-space: nowrap;
}
.bom .words {
  font-size: 11px;
}
.bom td:last-child,
.bom th:last-child {
  border-right: 0;
}
.bom .id {
  padding: 0;
}
.id div {
  display: flex;
  align-items: center;
  height: 20px;
  padding-left: 4px;
}
.id span {
  flex: 1;
  padding-left: 2px;
  line-height: 20px;
}
.selected td:not(:last-child):not(.id),
.selected .id span {
  border-top: 1px dotted #f08a30;
  background: #0078d7;
  color: #fff;
}
.c-id { width: 55px; }
.c-name { width: 93px; }
.c-qty { width: 48px; }
.c-area { width: 52px; }
.c-gap { width: 3px; }
.c-swatch { width: 8px; }
.c-color { width: 156px; }
.c-finish { width: 93px; }
.c-heat { width: 102px; }
.status {
  display: flex;
  align-items: center;
  height: 32px;
  margin-top: 4px;
  padding-bottom: 4px;
  background: linear-gradient(#fdfdfd, #f0f0f0);
  font-family: "Open Sans", "Noto Sans", sans-serif;
}
.status .grip {
  height: 20px;
  margin-right: 6px;
}
.status .bare {
  margin-right: 4px;
}

/* Menus */
.menu {
  position: absolute;
  z-index: 3;
  display: flex;
  flex-direction: column;
  padding: 1px;
  border: 1px solid #808080;
  background: linear-gradient(90deg, #f1f1f1 0 27px, #fdfdfd 27px);
  box-shadow: 4px 4px 4px rgb(0 0 0 / 50%);
}
.menu button {
  display: flex;
  align-items: center;
  gap: 15px;
  height: 26px;
  padding: 0 9px 0 2px;
  border: 1px solid transparent;
  background: none;
  text-align: left;
  white-space: nowrap;
}
.menu .active {
  border-color: #0078d7;
  background: #b4d6f3;
}
.menu span {
  flex: 1;
}
.menu b {
  width: 20px;
  height: 20px;
}
.menu i {
  border: solid transparent;
  border-width: 4px 0 4px 4px;
  border-left-color: #000;
}
.menu hr {
  width: calc(100% - 35px);
  height: 1px;
  margin: 2px 0 3px 35px;
  border: 0;
  background: #bdbdbd;
}
.context {
  top: 264px;
  left: 57px;
  width: 299px;
}
.colors {
  top: 376px;
  left: 355px;
  width: 232px;
}
.callout {
  position: absolute;
  z-index: 4;
  top: 380px;
  left: 525px;
  overflow: visible;
}
.callout-shape {
  filter: drop-shadow(2px 3px 2px rgb(0 0 0 / 55%));
}
.callout text {
  fill: #fff;
  font-family: "Liberation Sans", Arial, sans-serif;
  font-size: 46px;
}

/* Properties dialog */
.dialog {
  position: absolute;
  z-index: 2;
  top: 457px;
  left: 103px;
  width: 744px;
  border: 1px solid #707070;
  background: #f0f0f0;
  box-shadow: 6px 6px 5px rgb(0 0 0 / 60%);
}
.dialog-title {
  display: flex;
  align-items: center;
  gap: 34px;
  height: 30px;
  padding: 0 17px 0 8px;
  background: #fff;
}
.dialog-title h2 {
  flex: 1;
  font-size: 12px;
}
.dialog-title svg {
  display: block;
  width: 12px;
  height: 12px;
}
.dialog-tabs {
  display: flex;
  align-items: flex-end;
  height: 27px;
  margin: 0 0 -1px 8px;
}
.dialog-tabs button {
  position: relative;
  height: 19px;
  padding: 1px 6px 0;
  border: 1px solid #d9d9d9;
  border-left: 0;
  background: #f0f0f0;
  line-height: 16px;
  white-space: nowrap;
}
.dialog-tabs button:first-child {
  border-left: 1px solid #d9d9d9;
}
.dialog-tabs .on {
  height: 21px;
  padding: 0 8px 2px;
  border-bottom: 0;
  background: #fff;
}
.dialog-page {
  margin-left: 6px;
  padding: 8px 13px 16px 9px;
  border: 1px solid #dcdcdc;
  border-right: 0;
  background: #fff;
}
.dialog-row {
  display: flex;
  align-items: flex-end;
  gap: 25px;
  margin-bottom: 14px;
}
.push {
  width: 73px;
  height: 23px;
  padding: 0;
  border: 1px solid #adadad;
  background: #e1e1e1;
  white-space: nowrap;
}
.usun {
  width: 82px;
  height: 21px;
  margin: 0 auto 0 1px;
  border-color: #bfbfbf;
  background: #ccc;
  color: #838383;
}
.edit {
  width: 64px;
  height: 21px;
}
.field {
  display: flex;
  flex-direction: column;
}
.field label {
  margin-bottom: 5px;
}
.field select {
  width: 129px;
  height: 21px;
  padding: 0 5px 2px;
  border: 1px solid #0078d7;
  border-radius: 0;
  appearance: none;
  background:
    linear-gradient(#0078d7, #0078d7) 5px 2px / 37px 13px no-repeat,
    url("data:image/svg+xml,%3Csvg xmlns='http://www.w3.org/2000/svg' width='9' height='6'%3E%3Cpath d='M.5 .5l4 4 4-4' fill='none' stroke='%23555'/%3E%3C/svg%3E") no-repeat right 4px center,
    #fff;
  color: #fff;
}
.split {
  display: flex;
  gap: 1px;
  height: 139px;
  margin-right: 5px;
  background: linear-gradient(90deg, transparent 179px, #a0a0a0 179px 181px, transparent 181px);
}
.tree {
  display: flex;
  flex: none;
  flex-direction: column;
  width: 179px;
  padding: 1px;
  border: 1px solid #828790;
  background: #fff;
}
.node {
  display: flex;
  align-items: center;
  height: 19px;
  overflow: hidden;
  white-space: nowrap;
}
.node svg {
  flex: none;
}
.node.child {
  height: 20px;
  padding-left: 36px;
}
.node.child span {
  padding-left: 2px;
}
.picked {
  flex: 1;
  padding: 1px 2px 2px;
  background: #0078d7;
  color: #fff;
}
.hscroll {
  display: flex;
  justify-content: space-between;
  height: 15px;
  margin-top: auto;
  background: #f0f0f0;
}
.hscroll svg {
  width: 16px;
}
.hscroll span {
  width: 70%;
  margin-right: auto;
  background: #cdcdcd;
}
.grid-pane {
  display: flex;
  flex: 1;
  justify-content: space-between;
  align-items: flex-start;
  min-width: 0;
  border: 1px solid #e3e3e3;
  border-top-color: #828790;
  border-left: 0;
}
.props {
  width: 484px;
  border-collapse: collapse;
  table-layout: fixed;
}
.p-no { width: 23px; }
.p-name { width: 92px; }
.p-type { width: 46px; }
.p-value { width: 185px; }
.p-result { width: 92px; }
.p-check { width: 46px; }
.props th,
.props td {
  height: 20px;
  padding: 0 2px;
  overflow: hidden;
  border: 1px solid #6d6d6d;
  white-space: nowrap;
}
.props td {
  text-align: left;
}
.props .type {
  padding-left: 4px;
}
.props th {
  padding: 0;
  border-color: #000;
  background: #f0f0f0;
}
.props thead th {
  border-top-color: #6d6d6d;
}
.props th div {
  height: 19px;
  overflow: hidden;
  line-height: 12px;
}
.props tbody th {
  padding: 0 0 3px 3px;
  border-left: 0;
  font-family: "Liberation Sans", Arial, sans-serif;
  line-height: 14px;
}
.props .corner {
  border: 1px dotted #f00;
  border-top-color: #0cc;
  border-left-color: #0cc;
}
.props .link {
  padding: 0 2px;
}
.linked {
  display: flex;
  align-items: center;
  justify-content: space-between;
}
.props input {
  display: block;
  width: 13px;
  height: 13px;
  margin: 0 0 0 1px;
  border: 1px solid #ccc;
  appearance: none;
  background: #fff;
}
.fresh td,
.props .ro {
  background: #f0f0f0;
}
.vscroll {
  display: flex;
  flex-direction: column;
  align-self: stretch;
  justify-content: space-between;
  width: 15px;
  margin-right: 1px;
  background: #f0f0f0;
}
.vscroll svg {
  height: 18px;
}
.vscroll span {
  height: 36px;
  margin-top: auto;
  background: #cdcdcd;
}
.dialog-foot {
  position: relative;
  display: flex;
  justify-content: flex-end;
  gap: 9px;
  padding: 12px 25px 3px;
}
.main {
  border: 2px solid #0078d7;
}
.resize {
  position: absolute;
  right: 0;
  bottom: 0;
}
</style>
